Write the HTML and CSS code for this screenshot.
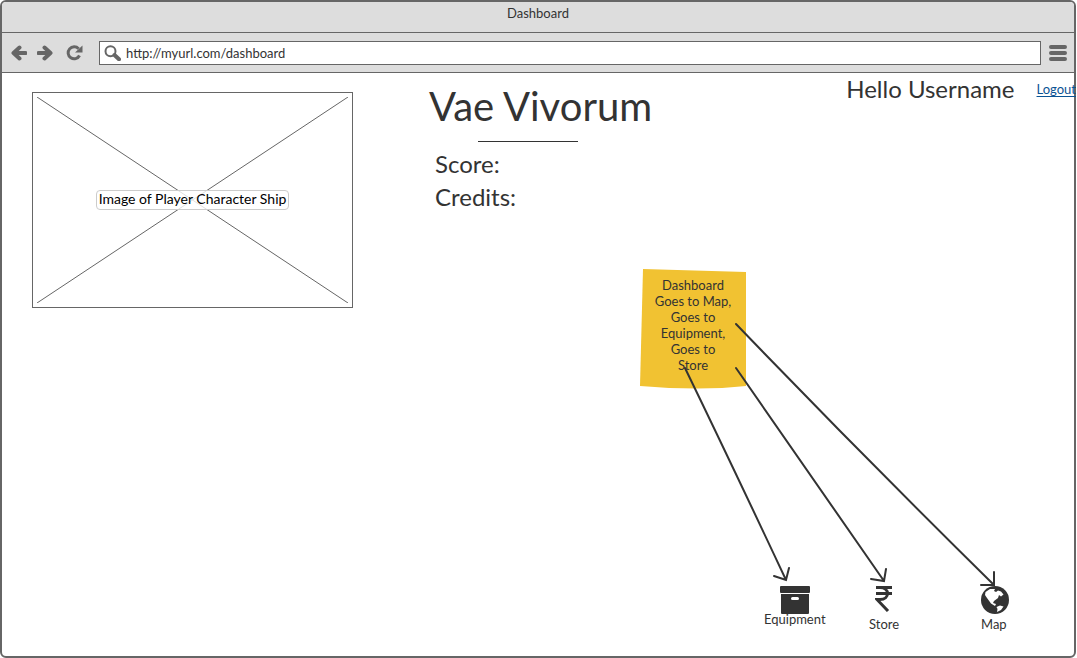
FILE: index.html
```html
<!DOCTYPE html>
<html lang="en">
<head>
<meta charset="utf-8">
<title>Dashboard</title>
<link rel="stylesheet" href="styles.css">
</head>
<body>
<div class="window">
  <header class="titlebar">Dashboard</header>
  <nav class="toolbar" aria-label="Browser">
    <button class="tool" type="button" aria-label="Back"><svg width="16" height="16" viewBox="0 0 16 16"><path d="M8.500 2.500L2.500 8l6 5.500M3 8h11.500" class="arrow-icon"/></svg></button>
    <button class="tool" type="button" aria-label="Forward"><svg width="16" height="16" viewBox="0 0 16 16"><path d="M7.500 2.500l6 5.500-6 5.500M13 8H1.500" class="arrow-icon"/></svg></button>
    <button class="tool reload" type="button" aria-label="Reload"><svg width="17" height="16" viewBox="0 0 17 16"><path d="M12.600 3.800A6 6 0 1 0 13.500 10.500" class="reload-arc"/><path d="M16.500 0.500V7.500H9z" fill="#666"/></svg></button>
    <label class="address">
      <svg width="17" height="16" viewBox="0 0 17 16" aria-hidden="true"><circle cx="6.500" cy="6.300" r="5" class="lens"/><path d="M10.500 10L15 14.300" class="handle"/></svg>
      <input type="text" value="http://myurl.com/dashboard" aria-label="Address">
    </label>
    <button class="tool menu" type="button" aria-label="Menu"><svg width="18" height="16" viewBox="0 0 18 16"><path d="M2 2h14M2 8h14M2 14h14" class="bars"/></svg></button>
  </nav>
  <main class="page">
    <figure class="ship">
      <svg class="cross" aria-hidden="true" viewBox="0 0 311 206" preserveAspectRatio="none"><path d="M0 0L311 206M0 206L311 0"/></svg>
      <figcaption>Image of Player Character Ship</figcaption>
    </figure>
    <section class="info">
      <h1>Vae Vivorum</h1>
      <hr>
      <p>Score:</p>
      <p>Credits:</p>
    </section>
    <div class="user">
      <span class="hello">Hello Username</span>
      <a href="#logout">Logout</a>
    </div>
    <div class="diagram">
      <div class="note">
        <svg width="106" height="121" viewBox="0 0 106 121" aria-hidden="true"><path d="M3 1L106 4V118Q60 123 0 118Z" fill="#f1c232"/></svg>
        <p>Dashboard<br>Goes to Map,<br>Goes to<br>Equipment,<br>Goes to<br>Store</p>
      </div>
      <a class="node equipment" href="#equipment">
        <svg width="30" height="28" viewBox="0 0 30 28" aria-hidden="true"><path fill="#333" fill-rule="evenodd" d="M1 0H29Q30 0 30 1V6Q30 7 29 7H1Q0 7 0 6V1Q0 0 1 0ZM1 8H29V27Q29 28 28 28H2Q1 28 1 27ZM12.500 11Q11 11 11 12.500Q11 14 12.500 14H17.500Q19 14 19 12.500Q19 11 17.500 11Z"/></svg>
        <span>Equipment</span>
      </a>
      <a class="node store" href="#store">
        <svg width="18" height="26" viewBox="0 0 18 26" aria-hidden="true"><path d="M1 1.500H17M1 7.500H17M1 1.500H5C15 1.500 15 13.500 5 13.500H2L13 25" class="rupee"/></svg>
        <span>Store</span>
      </a>
      <a class="node map" href="#map">
        <svg width="28" height="28" viewBox="0 0 28 28" aria-hidden="true"><circle cx="14" cy="14" r="14" fill="#333"/><path fill="#fff" d="M4.500 6L9 3L14 3L13 5L15 6L17 4.500L20 5.500L22.500 8.500L20 10.500L18 9L17 12L13 15L12 17L15 18L14 20L10 17.500L6 12L4 9ZM15.500 21L19 19.500L22.500 20.500L20 24L16 26L16.500 23Z"/></svg>
        <span>Map</span>
      </a>
      <svg class="links" aria-hidden="true">
        <path d="M683 295Q731 394 784 507M772 503L784 507L787 495"/>
        <path d="M734 295Q802 393 882 508M869 506L882 508L884 496"/>
        <path d="M734 251Q860 382 992 512M979 512H992V499"/>
      </svg>
    </div>
  </main>
</div>
</body>
</html>
```
FILE: styles.css
```css
* { box-sizing: border-box; }
body {
  margin: 0 1px 0 0;
  background: #fff;
  color: #333;
  font: 13px/16px Lato, "Open Sans", sans-serif;
}
p, h1, figure { margin: 0; }
svg { display: block; flex: none; fill: none; }
.window {
  display: flex;
  flex-direction: column;
  min-height: 100vh;
  border: 2px solid #666;
  border-radius: 6px;
}
.titlebar {
  height: 31px;
  padding-top: 3px;
  background: #ddd;
  border-bottom: 1px solid #666;
  border-radius: 4px 4px 0 0;
  text-align: center;
}
.toolbar {
  display: flex;
  align-items: center;
  height: 40px;
  padding: 0 7px 0 9px;
  background: #ddd;
  border-bottom: 1px solid #666;
}
.tool { margin-right: 10px; padding: 0; border: 0; background: none; }
.reload { margin: 0 16px 0 3px; }
.menu { margin: 0 0 0 8px; }
.arrow-icon { stroke: #666; stroke-width: 4; stroke-linecap: round; stroke-linejoin: round; }
.reload-arc { stroke: #666; stroke-width: 3; }
.bars { stroke: #666; stroke-width: 4; stroke-linecap: round; }
.lens { stroke: #666; stroke-width: 2; }
.handle { stroke: #666; stroke-width: 4; stroke-linecap: round; }
.address {
  display: flex;
  flex: 1;
  align-items: center;
  gap: 5px;
  height: 24px;
  padding-left: 4px;
  background: #fff;
  border: 1px solid #666;
}
.address input {
  flex: 1;
  min-width: 0;
  padding: 0;
  border: 0;
  outline: 0;
  background: none;
  color: #333;
  font: inherit;
}
.page {
  position: relative;
  display: flex;
  flex: 1;
  align-items: flex-start;
  padding-left: 30px;
}
.ship {
  display: grid;
  place-items: center;
  width: 321px;
  height: 216px;
  margin-top: 19px;
  padding: 4px;
  border: 1px solid #666;
}
.ship > * { grid-area: 1 / 1; }
.cross { width: 100%; height: 100%; stroke: #666; }
.ship figcaption {
  z-index: 1;
  padding: 0 2px 2px;
  border: 1px solid #ccc;
  border-radius: 4px;
  background: rgba(255, 255, 255, 0.8);
  color: #000;
  font-size: 14px;
}
.info { padding: 9px 0 0 76px; }
h1 { font-size: 40px; font-weight: 400; line-height: 48px; }
hr { width: 100px; height: 1px; margin: 11px 0 5px 49px; border: 0; background: #333; }
.info p { padding-left: 6px; font-size: 24px; line-height: 33px; }
.user { display: flex; align-items: center; gap: 22px; margin-left: auto; margin-right: -2px; padding-top: 2px; }
.hello { font-size: 24px; line-height: 28px; }
.user a { color: #0b5394; text-decoration: underline; text-underline-offset: 2px; }
.diagram { position: absolute; inset: 0; pointer-events: none; }
.note { position: absolute; left: 638px; top: 195px; display: grid; }
.note > * { grid-area: 1 / 1; }
.note p { padding-top: 9px; text-align: center; }
.node {
  position: absolute;
  display: flex;
  flex-direction: column;
  align-items: center;
  color: #333;
  text-decoration: none;
  pointer-events: auto;
}
.equipment { left: 762px; top: 513px; line-height: 10px; }
.store { left: 867px; top: 513px; gap: 4px; }
.map { left: 979px; top: 513px; gap: 2px; }
.map span { align-self: flex-start; }
.rupee { stroke: #333; stroke-width: 3; }
.links {
  position: absolute;
  width: 100%;
  height: 100%;
  overflow: visible;
  stroke: #333;
  stroke-width: 2;
  stroke-linecap: round;
}
```
